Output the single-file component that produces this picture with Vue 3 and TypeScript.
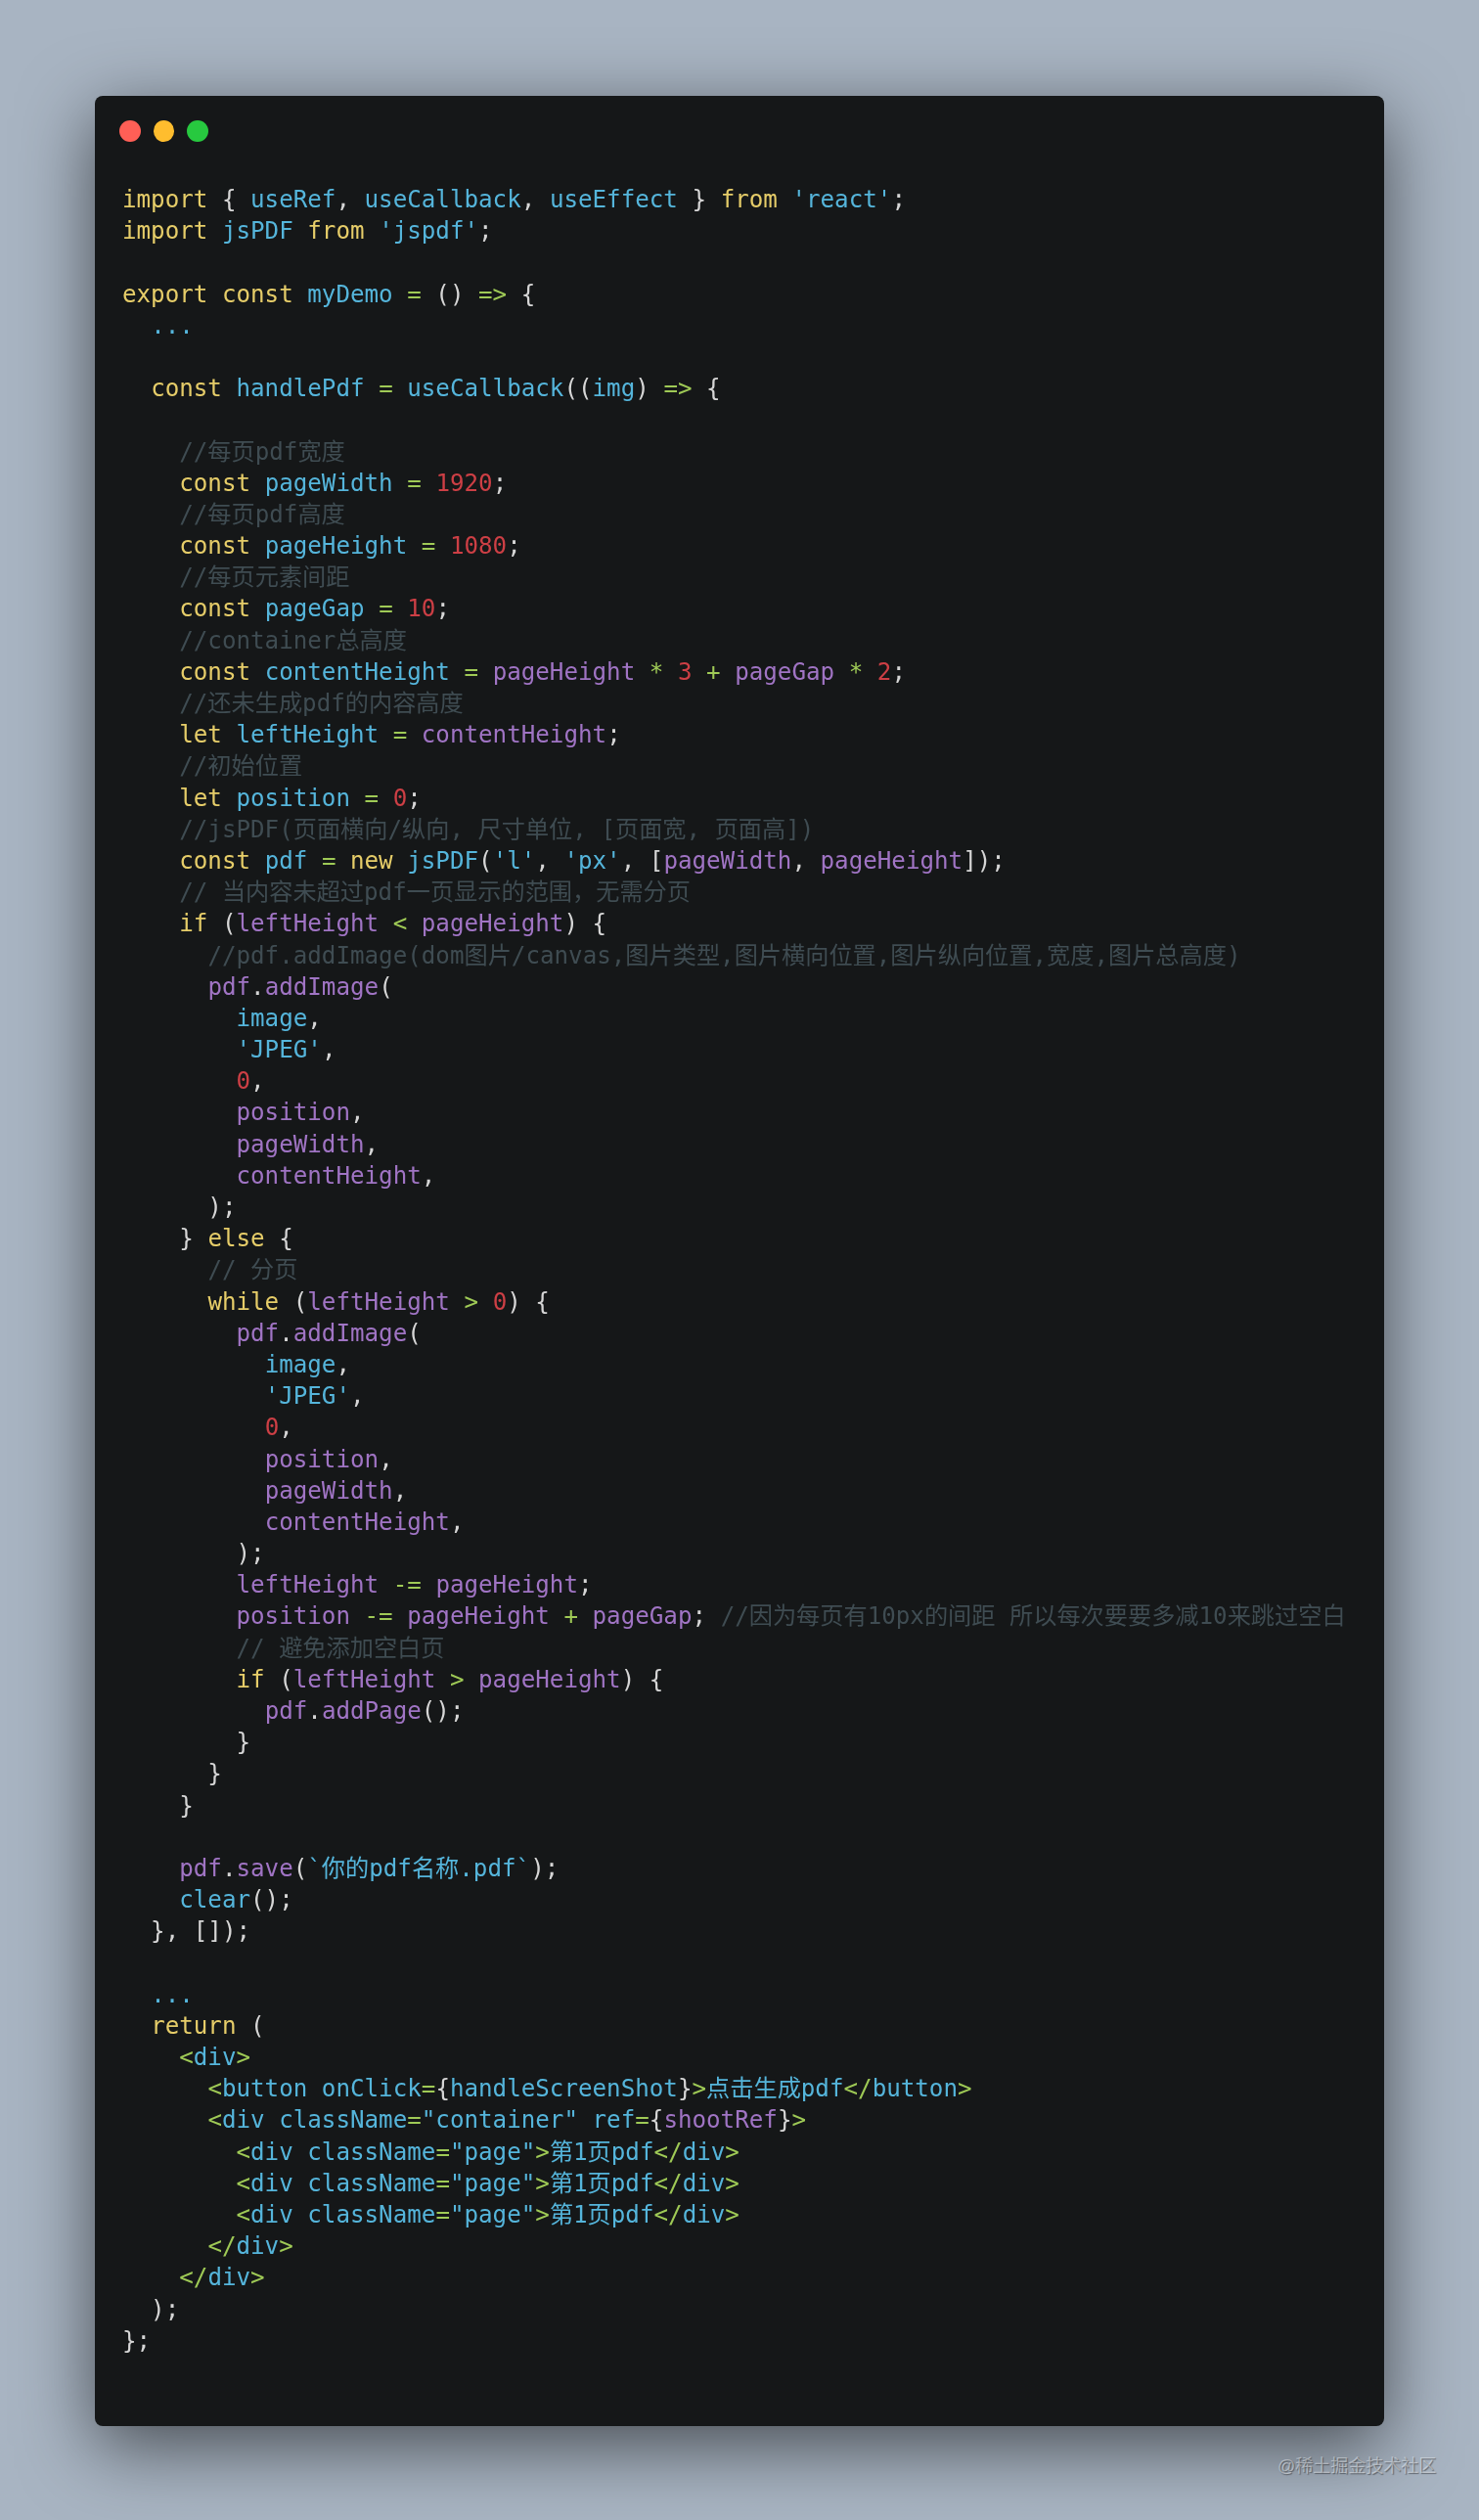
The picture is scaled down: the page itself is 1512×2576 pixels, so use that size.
<script setup lang="ts">
type Tok = { c: string; t: string };
const src: string[] = [
  "«y|import» { «b|useRef», «b|useCallback», «b|useEffect» } «y|from» «b|'react'»;",
  "«y|import» «b|jsPDF» «y|from» «b|'jspdf'»;",
  "",
  "«y|export const» «b|myDemo» «g|=» () «g|=>» {",
  "  «b|...»",
  "",
  "  «y|const» «b|handlePdf» «g|=» «b|useCallback»((«b|img») «g|=>» {",
  "",
  "    «m|//每页pdf宽度»",
  "    «y|const» «b|pageWidth» «g|=» «r|1920»;",
  "    «m|//每页pdf高度»",
  "    «y|const» «b|pageHeight» «g|=» «r|1080»;",
  "    «m|//每页元素间距»",
  "    «y|const» «b|pageGap» «g|=» «r|10»;",
  "    «m|//container总高度»",
  "    «y|const» «b|contentHeight» «g|=» «p|pageHeight» «g|*» «r|3» «g|+» «p|pageGap» «g|*» «r|2»;",
  "    «m|//还未生成pdf的内容高度»",
  "    «y|let» «b|leftHeight» «g|=» «p|contentHeight»;",
  "    «m|//初始位置»",
  "    «y|let» «b|position» «g|=» «r|0»;",
  "    «m|//jsPDF(页面横向/纵向, 尺寸单位, [页面宽, 页面高])»",
  "    «y|const» «b|pdf» «g|=» «y|new» «b|jsPDF»(«b|'l'», «b|'px'», [«p|pageWidth», «p|pageHeight»]);",
  "    «m|// 当内容未超过pdf一页显示的范围，无需分页»",
  "    «y|if» («p|leftHeight» «g|<» «p|pageHeight») {",
  "      «m|//pdf.addImage(dom图片/canvas,图片类型,图片横向位置,图片纵向位置,宽度,图片总高度)»",
  "      «p|pdf».«p|addImage»(",
  "        «b|image»,",
  "        «b|'JPEG'»,",
  "        «r|0»,",
  "        «p|position»,",
  "        «p|pageWidth»,",
  "        «p|contentHeight»,",
  "      );",
  "    } «y|else» {",
  "      «m|// 分页»",
  "      «y|while» («p|leftHeight» «g|>» «r|0») {",
  "        «p|pdf».«p|addImage»(",
  "          «b|image»,",
  "          «b|'JPEG'»,",
  "          «r|0»,",
  "          «p|position»,",
  "          «p|pageWidth»,",
  "          «p|contentHeight»,",
  "        );",
  "        «p|leftHeight» «g|-=» «p|pageHeight»;",
  "        «p|position» «g|-=» «p|pageHeight» «g|+» «p|pageGap»; «m|//因为每页有10px的间距 所以每次要要多减10来跳过空白»",
  "        «m|// 避免添加空白页»",
  "        «y|if» («p|leftHeight» «g|>» «p|pageHeight») {",
  "          «p|pdf».«p|addPage»();",
  "        }",
  "      }",
  "    }",
  "",
  "    «p|pdf».«p|save»(«b|`你的pdf名称.pdf`»);",
  "    «b|clear»();",
  "  }, []);",
  "",
  "  «b|...»",
  "  «y|return» (",
  "    «g|<»«b|div»«g|>»",
  "      «g|<»«b|button onClick»«g|=»{«b|handleScreenShot»}«g|>»«b|点击生成pdf»«g|</»«b|button»«g|>»",
  "      «g|<»«b|div className»«g|=»«b|\"container\" ref»«g|=»{«p|shootRef»}«g|>»",
  "        «g|<»«b|div className»«g|=»«b|\"page\"»«g|>»«b|第1页pdf»«g|</»«b|div»«g|>»",
  "        «g|<»«b|div className»«g|=»«b|\"page\"»«g|>»«b|第1页pdf»«g|</»«b|div»«g|>»",
  "        «g|<»«b|div className»«g|=»«b|\"page\"»«g|>»«b|第1页pdf»«g|</»«b|div»«g|>»",
  "      «g|</»«b|div»«g|>»",
  "    «g|</»«b|div»«g|>»",
  "  );",
  "};",
];

function parse(line: string): Tok[] {
  const out: Tok[] = [];
  const re = /«(\w)\|([^»]*)»|([^«]+)/g;
  let m: RegExpExecArray | null;
  while ((m = re.exec(line))) {
    if (m[1]) out.push({ c: m[1], t: m[2] });
    else out.push({ c: "w", t: m[3] });
  }
  return out;
}
const lines = src.map(parse);
</script>

<template>
  <div class="page">
    <div class="window">
      <div class="dots">
        <span class="dot red"></span>
        <span class="dot amber"></span>
        <span class="dot green"></span>
      </div>
      <pre class="code"><div v-for="(l, i) in lines" :key="i" class="line"><span v-for="(tok, j) in l" :key="j" :class="tok.c">{{ tok.t }}</span></div></pre>
    </div>
    <div class="mark">@稀土掘金技术社区</div>
  </div>
</template>

<style>
html, body { margin: 0; padding: 0; background: #a8b4c2; }
</style>

<style scoped>
.page {
  position: relative;
  box-sizing: border-box;
  width: 1512px;
  height: 2576px;
  padding: 98px 97px 96px;
  background: #a8b4c2;
  overflow: hidden;
}
.window {
  box-sizing: border-box;
  width: 1318px;
  height: 2382px;
  padding: 25px 28px 0;
  border-radius: 8px;
  background: #151718;
  box-shadow: 0 20px 76px rgba(0, 0, 0, 0.58);
}
.dots {
  display: flex;
  gap: 13px;
  margin-left: -3px;
  height: 22px;
}
.dot {
  width: 21.7px;
  height: 22px;
  border-radius: 50%;
}
.red { background: #ff5f56; }
.amber { background: #ffbd2e; }
.green { background: #27c93f; }
.code {
  margin: 43px 0 0;
  font-family: "DejaVu Sans Mono", "Noto Sans CJK SC", monospace;
  font-size: 24.2px;
  line-height: 32.2px;
  color: #d6d6d6;
  white-space: pre;
  filter: blur(0.45px);
}
.line { height: 32.2px; }
.w { color: #d6d6d6; }
.y { color: #e6cd69; }
.b { color: #55b5db; }
.g { color: #9fca56; }
.r { color: #cd3f45; }
.p { color: #a074c4; }
.m { color: #3f4c52; }
.mark {
  position: absolute;
  left: 1306px;
  top: 2509px;
  font-family: "Liberation Sans", "Noto Sans CJK SC", sans-serif;
  font-size: 18px;
  line-height: 24px;
  color: rgba(255, 255, 255, 0.42);
  text-shadow: 1px 1px 1px rgba(0, 0, 0, 0.4);
}
</style>
